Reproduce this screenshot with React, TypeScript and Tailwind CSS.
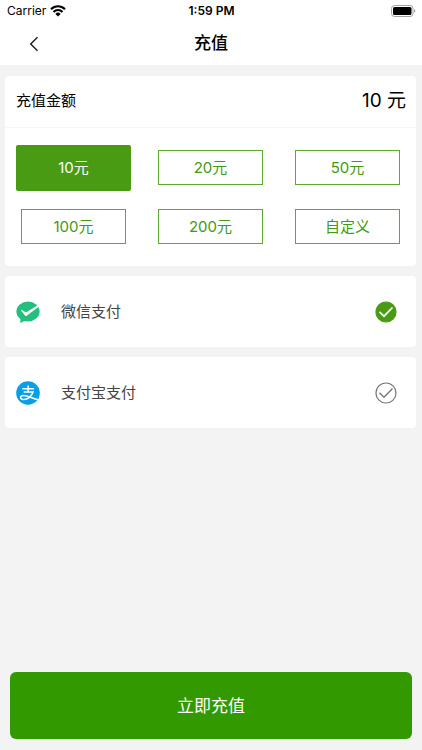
import { useState } from "react";
import clsx from "clsx";

const AMOUNTS = ["10", "20", "50", "100", "200"];

type Method = "wechat" | "alipay";

const WifiIcon = () => (
  <svg viewBox="0 0 16 12" className="h-3 w-4" aria-hidden="true">
    <path d="M8 11.6 5.4 8.9a3.6 3.6 0 0 1 5.2 0Z" fill="#000" />
    <path d="M3.5 7a6.2 6.2 0 0 1 9 0" fill="none" stroke="#000" strokeWidth="2.1" />
    <path d="M1 4.2a9.9 9.9 0 0 1 14 0" fill="none" stroke="#000" strokeWidth="2.1" />
  </svg>
);

const BatteryIcon = () => (
  <svg viewBox="0 0 25 12" className="h-3 w-[25px]" aria-hidden="true">
    <rect x="0.5" y="0.5" width="21.5" height="11" rx="3" fill="none" stroke="#a3a3a3" />
    <rect x="2" y="2" width="18.5" height="8" rx="1.6" fill="#000" />
    <path d="M23.2 4.2a2 2 0 0 1 0 3.6Z" fill="#8c8c8c" />
  </svg>
);

const WechatPayIcon = () => (
  <svg viewBox="0 0 24 22" className="h-[22px] w-6" aria-hidden="true">
    <ellipse cx="12" cy="10.5" rx="11.6" ry="10" fill="#22c07c" />
    <path d="M4.5 16.5 4.3 21.9 9.5 19.5Z" fill="#22c07c" />
    <path
      d="M5.7 8.7 10 11.4 21.2 4.6 22.4 5.9 10.7 14.7Q9.5 15.4 8.8 14.2L5.1 9.5Q5 8.5 5.7 8.7Z"
      fill="#fff"
    />
  </svg>
);

const AlipayIcon = () => (
  <svg viewBox="0 0 24 24" className="size-6" fill="none" aria-hidden="true">
    <circle cx="12" cy="12" r="11.8" fill="#069fe8" />
    <path
      d="M12.2 4.5v6.5M6.3 7.7h11.8M7.7 11.1h9.4c-1.4 4-5.3 7.5-9.3 7.5-4.3 0-4.2-4.1-.4-4.1 4.3 0 8.3 2.6 15.1 4.3"
      stroke="#fff"
      strokeWidth="1.5"
    />
  </svg>
);

const CheckMark = ({ checked }: { checked: boolean }) => (
  <svg viewBox="0 0 22 22" className="size-[22px]" fill="none" aria-hidden="true">
    <circle
      cx="11"
      cy="11"
      r="10"
      fill={checked ? "#4a9b14" : "#fff"}
      stroke={checked ? "#4a9b14" : "#777"}
      strokeWidth="1.2"
    />
    <path
      d="m4.5 10.8 4.5 4.4 8.5-8.7"
      stroke={checked ? "#fff" : "#777"}
      strokeWidth={checked ? "1.7" : "1.4"}
    />
  </svg>
);

type PayRowProps = {
  value: Method;
  label: string;
  icon: React.ReactNode;
  checked: boolean;
  onSelect: (value: Method) => void;
};

const PayRow = ({ value, label, icon, checked, onSelect }: PayRowProps) => (
  <label className="relative flex h-[71px] cursor-pointer items-center rounded-sm bg-white pr-[19px] pl-[11px]">
    <input
      type="radio"
      name="method"
      value={value}
      checked={checked}
      onChange={() => onSelect(value)}
      className="sr-only"
    />
    <span className="shrink-0">{icon}</span>
    <span className="ml-[21px] flex-1 pt-0.5 text-[15px] text-[#444]">{label}</span>
    <CheckMark checked={checked} />
  </label>
);

/**
 * App - Top-up page: pick an amount and a payment method.
 */
const App = () => {
  const [amount, setAmount] = useState("10");
  const [method, setMethod] = useState<Method>("wechat");

  return (
    <div className="flex min-h-screen flex-col bg-[#f3f3f3] font-[Inter,'Noto_Sans_CJK_SC',sans-serif] text-black">
      <header className="bg-white">
        <div className="grid h-[22px] grid-cols-3 items-center pr-1.5 pl-[7px] text-xs">
          <div className="flex items-center gap-1">
            <span>Carrier</span>
            <WifiIcon />
          </div>
          <span className="text-center font-semibold">1:59 PM</span>
          <div className="flex justify-end">
            <BatteryIcon />
          </div>
        </div>
        <div className="grid h-[43px] grid-cols-3 items-center px-6">
          <button type="button" aria-label="返回" className="flex size-5 items-center justify-center">
            <svg viewBox="0 0 10 16" className="h-4 w-2.5" fill="none" aria-hidden="true">
              <path d="M8.5 1.2 1.7 8l6.8 6.8" stroke="#222" strokeWidth="1.5" />
            </svg>
          </button>
          <h1 className="text-center text-[17px] font-medium">充值</h1>
        </div>
      </header>

      <main className="flex flex-col gap-2.5 pt-[11px] pr-1.5 pl-[5px]">
        <section className="rounded-sm bg-white pb-2.5">
          <div className="flex h-[52px] items-center justify-between border-b border-[#f5f5f5] pr-2.5 pl-[11px]">
            <h2 className="text-[15px]">充值金额</h2>
            <span className="text-[19px]">{amount} 元</span>
          </div>
          <div className="grid auto-rows-[59px] grid-cols-3 place-items-center pt-2.5">
            {AMOUNTS.map((item) => (
              <button
                key={item}
                type="button"
                aria-pressed={item === amount}
                onClick={() => setAmount(item)}
                className={clsx(
                  "pt-0.5 text-[15px]",
                  item === amount
                    ? "h-[46px] w-[115px] rounded-xs bg-[#4a9b14] text-white"
                    : "h-[35px] w-[105px] border border-[#5cab30] text-[#429a10]"
                )}
              >
                {item}元
              </button>
            ))}
            <button type="button" className="h-[35px] w-[105px] border border-[#5cab30] pt-0.5 text-[15px] text-[#429a10]">
              自定义
            </button>
          </div>
        </section>

        <PayRow
          value="wechat"
          label="微信支付"
          icon={<WechatPayIcon />}
          checked={method === "wechat"}
          onSelect={setMethod}
        />
        <PayRow
          value="alipay"
          label="支付宝支付"
          icon={<AlipayIcon />}
          checked={method === "alipay"}
          onSelect={setMethod}
        />
      </main>

      <footer className="mt-auto px-2.5 pt-2.5 pb-[11px]">
        <button type="button" className="h-[67px] w-full rounded-md bg-[#339900] pt-0.5 text-[17px] text-white">
          立即充值
        </button>
      </footer>
    </div>
  );
};

export default App;
